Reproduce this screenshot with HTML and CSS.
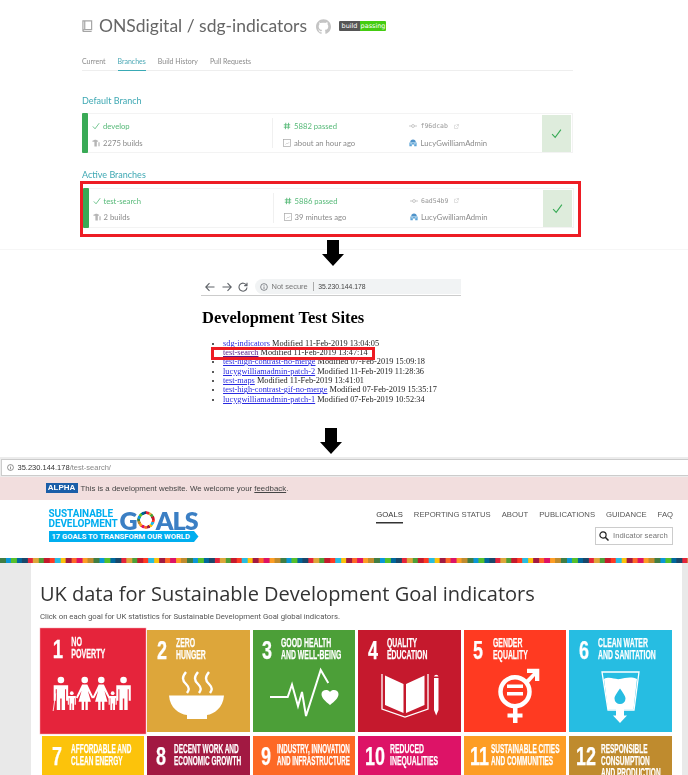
FILE: index.html
```html
<!DOCTYPE html>
<html lang="en">
<head>
<meta charset="utf-8">
<title>Deployment overview</title>
<link rel="stylesheet" href="styles.css">
</head>
<body>
<svg class="sprite" aria-hidden="true">
  <symbol id="check" viewBox="0 0 10 10"><path d="M1 5.5 3.8 8.5 9 1.5" fill="none" stroke="currentColor" stroke-width="1"/></symbol>
  <symbol id="hash" viewBox="0 0 10 10"><path d="M3.5 1 3 9M7 1 6.5 9M1 3.5H9M1 6.5H9" fill="none" stroke="currentColor" stroke-width="1.1"/></symbol>
  <symbol id="builds" viewBox="0 0 10 10"><path d="M0 2.5 3.5 1H5L8 2.5 7 3.5H6V9.5H3V3.5H1ZM8 4H9.5V9H8Z" fill="#b5b5b5"/></symbol>
  <symbol id="cal" viewBox="0 0 10 10"><rect x=".5" y=".5" width="9" height="9" fill="none" stroke="#aaa" stroke-width=".9"/><path d="M3 7 5 5 6 6 7.5 4" fill="none" stroke="#bbb" stroke-width=".7"/></symbol>
  <symbol id="commit" viewBox="0 0 10 10"><circle cx="5" cy="5" r="1.8" fill="none" stroke="#aaa" stroke-width=".8"/><path d="M0 5H3M7 5H10" stroke="#aaa" stroke-width=".8"/></symbol>
  <symbol id="ext" viewBox="0 0 10 10"><path d="M7.5 6V9H1V2.5H4M5 1H9V5M9 1 4.5 5.5" fill="none" stroke="#bbb" stroke-width=".9"/></symbol>
  <symbol id="avatar" viewBox="0 0 10 10"><path d="M1.5 4C1.5 1.5 3 .5 5 .5S8.500 1.500 8.500 4Z" fill="#4f93c9"/><path d="M.5 4.500H9.500V9H6.500V7H3.500V9H.5Z" fill="#5ba3d6"/><path d="M1.500 6H4M6 6H8.500" stroke="#fff" stroke-width=".8"/></symbol>
  <symbol id="down" viewBox="0 0 22 26"><path d="M5 0H17V14H22L11 26 0 14H5Z"/></symbol>
  <symbol id="info" viewBox="0 0 10 10"><circle cx="5" cy="5" r="4.200" fill="none" stroke="currentColor" stroke-width=".9"/><path d="M5 4.300V7.500M5 2.500V3.500" stroke="currentColor" stroke-width=".9"/></symbol>
  <symbol id="man" viewBox="-8 -4 16 34"><circle cy="0" r="3.200"/><path d="M-7 5H7V20H5V9H4V29H.7V18H-.7V29H-4V9H-5V20H-7Z"/></symbol>
  <symbol id="woman" viewBox="-9 -4 18 34"><circle cy="0" r="3.200"/><path d="M-2.500 4.500H2.500L8.500 17 7 18 3 10.500 6 21H3V29H.7V21H-.7V29H-3V21H-6L-3 10.500-7 18-8.500 17Z"/></symbol>
</svg>

<main class="page">
  <section class="ci">
    <div class="repo">
      <svg class="repo-icon" viewBox="0 0 12 14"><path d="M1 1.500H10.500V11H3A2 2 0 0 0 1 13ZM1 13H10.500M3 1.500V11" fill="none" stroke="#a5a5a5" stroke-width="1.300"/></svg>
      <h1 class="repo-name">ONSdigital / sdg-indicators</h1>
      <svg class="gh-icon" viewBox="0 0 24 24"><path fill="#c4c4c4" d="M12 .297c-6.63 0-12 5.373-12 12 0 5.303 3.438 9.8 8.205 11.385.6.113.82-.258.82-.577 0-.285-.01-1.04-.015-2.04-3.338.724-4.042-1.61-4.042-1.61C4.422 18.07 3.633 17.7 3.633 17.7c-1.087-.744.084-.729.084-.729 1.205.084 1.838 1.236 1.838 1.236 1.07 1.835 2.809 1.305 3.495.998.108-.776.417-1.305.76-1.605-2.665-.3-5.466-1.332-5.466-5.93 0-1.31.465-2.38 1.235-3.22-.135-.303-.54-1.523.105-3.176 0 0 1.005-.322 3.3 1.23.96-.267 1.98-.399 3-.405 1.02.006 2.04.138 3 .405 2.28-1.552 3.285-1.23 3.285-1.23.645 1.653.24 2.873.12 3.176.765.84 1.23 1.91 1.23 3.22 0 4.61-2.805 5.625-5.475 5.92.42.36.81 1.096.81 2.22 0 1.606-.015 2.896-.015 3.286 0 .315.21.69.825.57C20.565 22.092 24 17.592 24 12.297c0-6.627-5.373-12-12-12"/></svg>
      <span class="badge"><span class="badge-l">build</span><span class="badge-r">passing</span></span>
    </div>
    <nav class="tabs">
      <a class="tab">Current</a>
      <a class="tab tab-on">Branches</a>
      <a class="tab">Build History</a>
      <a class="tab">Pull Requests</a>
    </nav>
    <h2 class="ci-head ci-head-first">Default Branch</h2>
    <div class="card">
      <div class="bar"></div>
      <div class="cell cell-a">
        <div class="row ok"><svg class="ico"><use href="#check"/></svg>develop</div>
        <div class="row"><svg class="ico"><use href="#builds"/></svg>2275 builds</div>
      </div>
      <div class="cell cell-b">
        <div class="row ok"><svg class="ico"><use href="#hash"/></svg>5882 passed</div>
        <div class="row"><svg class="ico"><use href="#cal"/></svg>about an hour ago</div>
      </div>
      <div class="cell cell-c">
        <div class="row"><svg class="ico"><use href="#commit"/></svg><span class="sha">f96dcab</span><svg class="ico-ext"><use href="#ext"/></svg></div>
        <div class="row"><svg class="ico"><use href="#avatar"/></svg>LucyGwilliamAdmin</div>
      </div>
      <div class="status"><svg class="ico-status"><use href="#check"/></svg></div>
    </div>
    <h2 class="ci-head">Active Branches</h2>
    <div class="redbox">
      <div class="card">
        <div class="bar"></div>
        <div class="cell cell-a">
          <div class="row ok"><svg class="ico"><use href="#check"/></svg>test-search</div>
          <div class="row"><svg class="ico"><use href="#builds"/></svg>2 builds</div>
        </div>
        <div class="cell cell-b">
          <div class="row ok"><svg class="ico"><use href="#hash"/></svg>5886 passed</div>
          <div class="row"><svg class="ico"><use href="#cal"/></svg>39 minutes ago</div>
        </div>
        <div class="cell cell-c">
          <div class="row"><svg class="ico"><use href="#commit"/></svg><span class="sha">6ad54b9</span><svg class="ico-ext"><use href="#ext"/></svg></div>
          <div class="row"><svg class="ico"><use href="#avatar"/></svg>LucyGwilliamAdmin</div>
        </div>
        <div class="status"><svg class="ico-status"><use href="#check"/></svg></div>
      </div>
    </div>
  </section>

  <svg class="arrow arrow-one"><use href="#down"/></svg>

  <section class="sites">
    <div class="toolbar">
      <svg class="tb-btn" viewBox="0 0 10 10"><path d="M9.500 5H1M4.500 1.200 .8 5 4.500 8.800" fill="none" stroke="#5f6368" stroke-width="1.100"/></svg>
      <svg class="tb-btn" viewBox="0 0 10 10"><path d="M.5 5H9M5.500 1.200 9.200 5 5.500 8.800" fill="none" stroke="#5f6368" stroke-width="1.100"/></svg>
      <svg class="tb-btn" viewBox="0 0 10 10"><path d="M8.500 3.200A4 4 0 1 0 9 5.500M9 .8V3.600H6.200" fill="none" stroke="#5f6368" stroke-width="1.100"/></svg>
      <div class="omni">
        <svg class="omni-info"><use href="#info"/></svg>
        <span class="omni-warn">Not secure</span>
        <span class="omni-url">35.230.144.178</span>
      </div>
    </div>
    <h2 class="sites-title">Development Test Sites</h2>
    <div class="sites-list">
      <ul class="list">
        <li><a class="lnk">sdg-indicators</a> Modified 11-Feb-2019 13:04:05</li>
        <li><a class="lnk lnk-seen">test-search</a> Modified 11-Feb-2019 13:47:14</li>
        <li><a class="lnk">test-high-contrast-no-merge</a> Modified 07-Feb-2019 15:09:18</li>
        <li><a class="lnk">lucygwilliamadmin-patch-2</a> Modified 11-Feb-2019 11:28:36</li>
        <li><a class="lnk">test-maps</a> Modified 11-Feb-2019 13:41:01</li>
        <li><a class="lnk">test-high-contrast-gif-no-merge</a> Modified 07-Feb-2019 15:35:17</li>
        <li><a class="lnk">lucygwilliamadmin-patch-1</a> Modified 07-Feb-2019 10:52:34</li>
      </ul>
      <div class="list-mark"></div>
    </div>
  </section>

  <svg class="arrow arrow-two"><use href="#down"/></svg>

  <section class="site">
    <div class="addr">
      <div class="addr-box">
        <svg class="addr-info"><use href="#info"/></svg>
        <span class="addr-host">35.230.144.178</span><span class="addr-path">/test-search/</span>
      </div>
    </div>
    <div class="alpha">
      <span class="alpha-tag">ALPHA</span>
      <span class="alpha-text">This is a development website. We welcome your <u>feedback</u>.</span>
    </div>
    <header class="head">
      <div class="logo">
        <div class="logo-top">
          <div class="logo-sd">SUSTAINABLE<br>DEVELOPMENT</div>
          <div class="logo-goals"><span>G</span><span class="wheel"></span><span>ALS</span></div>
        </div>
        <div class="logo-strip">17 GOALS TO TRANSFORM OUR WORLD</div>
      </div>
      <div class="head-right">
        <nav class="menu">
          <a class="menu-item menu-on">GOALS</a>
          <a class="menu-item">REPORTING STATUS</a>
          <a class="menu-item">ABOUT</a>
          <a class="menu-item">PUBLICATIONS</a>
          <a class="menu-item">GUIDANCE</a>
          <a class="menu-item">FAQ</a>
        </nav>
        <div class="search">
          <svg class="search-ico" viewBox="0 0 10 10"><circle cx="4" cy="4" r="3.100" fill="none" stroke="#222" stroke-width="1.200"/><path d="M6.300 6.300 9.500 9.500" stroke="#222" stroke-width="1.500"/></svg>
          <span>Indicator search</span>
        </div>
      </div>
    </header>
    <div class="rainbow"></div>
    <div class="body">
      <div class="content">
        <h2 class="lead">UK data for Sustainable Development Goal indicators</h2>
        <p class="intro">Click on each goal for UK statistics for Sustainable Development Goal global indicators.</p>
        <div class="goals">
          <a class="tile g1">
            <div class="tile-head"><span class="num"><b>1</b></span><span class="lbl">NO<br>POVERTY</span></div>
            <svg class="art" viewBox="0 34 102 68" fill="#fff">
              <path d="M12.500 80 15 63" stroke="#fff" stroke-width=".8"/>
              <use href="#man" x="12" y="46" width="16" height="34"/>
              <use href="#man" x="26" y="60.500" width="9" height="19"/>
              <use href="#woman" x="34" y="46" width="18" height="34"/>
              <use href="#woman" x="50" y="46" width="18" height="34"/>
              <use href="#man" x="65.500" y="60.500" width="9" height="19"/>
              <use href="#man" x="72.500" y="46" width="16" height="34"/>
            </svg>
          </a>
          <a class="tile g2">
            <div class="tile-head"><span class="num"><b>2</b></span><span class="lbl">ZERO<br>HUNGER</span></div>
            <svg class="art" viewBox="0 34 102 68">
              <path d="M22 65.500H77C76 78 67 84 60 85V89H40V85C32 84 23 78 22 65.500Z" fill="#fff"/>
              <path d="M39 42C35 47 35 50 39 54S42 60 40 63M51 42C47 47 47 50 51 54S54 60 52 63M62 42C58 47 58 50 62 54S65 60 63 63" fill="none" stroke="#fff" stroke-width="2.400"/>
            </svg>
          </a>
          <a class="tile g3">
            <div class="tile-head"><span class="num"><b>3</b></span><span class="lbl">GOOD HEALTH<br>AND WELL-BEING</span></div>
            <svg class="art" viewBox="0 34 102 68">
              <path d="M17 67H34.700L39 54.500 45 76 49 62 53 86 67.700 40 75.300 53" fill="none" stroke="#fff" stroke-width="2"/>
              <path d="M77 75C72 71 68.500 68 68.500 64S74.500 58.500 77 62C79.500 58.500 85.500 60 85.500 64S82 71 77 75Z" fill="#fff"/>
            </svg>
          </a>
          <a class="tile g4">
            <div class="tile-head"><span class="num"><b>4</b></span><span class="lbl">QUALITY<br>EDUCATION</span></div>
            <svg class="art" viewBox="0 34 102 68" fill="#fff">
              <path d="M27 45.500 45.500 54V83L27 75ZM66.500 45.500 48 54V83L66.500 75Z"/>
              <path d="M24 44V79L47 87 70 79V44" fill="none" stroke="#fff" stroke-width="1.300"/>
              <path d="M76 46.500A2.300 2.300 0 0 1 80.500 46.500H76ZM76 48H80.500V80L78.200 85.500 76 80Z"/>
            </svg>
          </a>
          <a class="tile g5">
            <div class="tile-head"><span class="num"><b>5</b></span><span class="lbl">GENDER<br>EQUALITY</span></div>
            <svg class="art" viewBox="0 34 102 68" fill="#fff">
              <circle cx="51" cy="61.700" r="14.500" fill="none" stroke="#fff" stroke-width="4.500"/>
              <path d="M43 54.500H59V58H43ZM43 62H59V65.500H43ZM49 76H53.500V83.500H58.500V87.500H53.500V93H49V87.500H43.500V83.500H49ZM61 51 69 43H63V38.700H75.300V51H71V46L64 54Z"/>
            </svg>
          </a>
          <a class="tile g6">
            <div class="tile-head"><span class="num"><b>6</b></span><span class="lbl">CLEAN WATER<br>AND SANITATION</span></div>
            <svg class="art" viewBox="0 34 102 68">
              <path d="M33 42H70L65 80H39Z" fill="none" stroke="#fff" stroke-width="1.300"/>
              <path d="M35 49C41 46 46 50 51 49S62 46 68 49L64.500 79.500H55V85.500H58L51 93 44 85.500H47V79.500H39Z" fill="#fff"/>
              <path d="M51 58.500C48 63 45.500 66 45.500 68.500A5.500 5.500 0 0 0 56.500 68.500C56.500 66 54 63 51 58.500Z" fill="#26bde2"/>
            </svg>
          </a>
          <a class="tile g7"><div class="tile-head"><span class="num"><b>7</b></span><span class="lbl">AFFORDABLE AND<br>CLEAN ENERGY</span></div></a>
          <a class="tile g8"><div class="tile-head"><span class="num"><b>8</b></span><span class="lbl">DECENT WORK AND<br>ECONOMIC GROWTH</span></div></a>
          <a class="tile g9"><div class="tile-head"><span class="num"><b>9</b></span><span class="lbl">INDUSTRY, INNOVATION<br>AND INFRASTRUCTURE</span></div></a>
          <a class="tile g10"><div class="tile-head"><span class="num"><b>10</b></span><span class="lbl">REDUCED<br>INEQUALITIES</span></div></a>
          <a class="tile g11"><div class="tile-head"><span class="num"><b>11</b></span><span class="lbl">SUSTAINABLE CITIES<br>AND COMMUNITIES</span></div></a>
          <a class="tile g12"><div class="tile-head"><span class="num"><b>12</b></span><span class="lbl">RESPONSIBLE<br>CONSUMPTION<br>AND PRODUCTION</span></div></a>
        </div>
      </div>
    </div>
  </section>
</main>
</body>
</html>
```

FILE: styles.css
```css
* { box-sizing: border-box; }
html, body { margin: 0; padding: 0; background: #fff; }
html { height: 775px; overflow: hidden; }
body { width: 688px; height: 775px; overflow: hidden; font-family: "Liberation Sans", Arial, sans-serif; }
.page { height: 775px; overflow: hidden; filter: blur(.3px); }
.sprite { display: none; }
h1, h2, p, ul { margin: 0; padding: 0; font-weight: normal; }

/* CI dashboard */
.ci { height: 250px; padding: 16px 115px 0 82px; border-bottom: 1px solid #f6f6f6; font-family: Lato, sans-serif; }
.repo { display: flex; align-items: center; height: 20px; }
.repo-icon { width: 11px; height: 14px; margin-right: 6px; }
.repo-name { font-size: 17.500px; color: #666; line-height: 20px; width: 217px; white-space: nowrap; }
.gh-icon { width: 15px; height: 15px; margin-right: 8px; }
.badge { display: flex; height: 10px; font: 6.500px/10px "DejaVu Sans", sans-serif; color: #fff; border-radius: 1px; overflow: hidden; }
.badge-l { width: 21px; background: #555; text-align: center; }
.badge-r { width: 26px; background: #4c1; text-align: center; }
.tabs { display: flex; gap: 12px; height: 19px; margin-top: 16px; border-bottom: 1px solid #eee; font-size: 7px; line-height: 18px; color: #8a8a8a; }
.tab { height: 19px; }
.tab-on { color: #4aa8b5; border-bottom: 1px solid #39aab5; }
.ci-head { font-size: 9px; line-height: 12px; color: #3ea8b3; margin-top: 16px; }
.ci-head-first { margin-top: 24px; }
.ci-head + .card { margin-top: 6px; }
.card { display: grid; grid-template-columns: 6px 184px 137px 133px 1fr; height: 40px; width: 491px; border: 1px solid #f3f3f3; border-left: 0; font-size: 7.700px; color: #8b8b8b; }
.bar { background: #39aa56; margin-top: -1px; margin-bottom: -1px; border-radius: 1px; }
.cell { height: 30px; margin-top: 4px; }
.cell-a { padding-left: 4px; }
.cell-b { padding-left: 10px; border-left: 1px solid #f0f0f0; }
.row { display: flex; align-items: center; line-height: 16.500px; height: 16.500px; white-space: nowrap; }
.ok { color: #56b978; }
.ico { width: 8px; height: 8px; margin-right: 3px; flex: none; }
.cell-c .ico { margin-right: 3.500px; }
.sha { font: 6.500px "DejaVu Sans Mono", monospace; color: #999; }
.ico-ext { width: 5px; height: 5px; margin-left: 6px; }
.status { background: #deecdc; margin: 1px 1px 0 0; display: flex; align-items: center; justify-content: center; color: #39aa56; }
.ico-status { width: 11px; height: 11px; }
.redbox { width: 501px; margin: 0 0 0 -2.500px; padding: 3.500px 4.500px 6px 0; border: 3px solid #ed1c24; }

.arrow { display: block; width: 22px; height: 26px; fill: #000; position: relative; }
.arrow-one { margin: -10px 0 0 322px; }
.arrow-two { margin: 0 0 0 320px; }

/* Test site index */
.sites { margin: 13px 0 0 201px; height: 149px; }
.toolbar { display: flex; align-items: center; width: 260px; height: 17px; border-bottom: 1px solid #ccc; padding-left: 4px; padding-bottom: 1px; }
.tb-btn { width: 10px; height: 10px; margin-right: 6.500px; flex: none; }
.omni { display: flex; align-items: center; flex: 1; height: 15px; background: #f1f3f4; border-radius: 8px 0 0 8px; padding-left: 5px; font: 7.500px "Liberation Sans", sans-serif; }
.omni-info { width: 8px; height: 8px; color: #5f6368; margin-right: 4px; }
.omni-warn { color: #777; padding-right: 5px; border-right: 1px solid #aaa; line-height: 9px; }
.omni-url { color: #444; margin-left: 4.500px; font-size: 6.800px; }
.sites-title { font: bold 16.500px/18px "Liberation Serif", serif; color: #000; margin: 12.500px 0 0 1px; white-space: nowrap; }
.sites-list { position: relative; margin-top: 12px; }
.list { list-style: disc; padding-left: 22px; font: 8.300px/9.350px "Liberation Serif", serif; color: #222; white-space: nowrap; }
.lnk { color: #2a2ae0; text-decoration: underline; }
.lnk-seen { color: #551a8b; }
.list-mark { position: absolute; left: 10px; top: 8px; width: 164px; height: 13px; border: 3px solid #ed1c24; }

/* SDG website */
.site { margin-top: 3px; }
.addr { height: 19.500px; padding: 1.500px 0 1px 1px; background: #ececec; }
.addr-box { display: flex; align-items: center; width: 700px; height: 17px; padding-left: 5px; background: #fff; border: 1px solid #ccc; font-size: 7.500px; }
.addr-info { width: 7px; height: 7px; color: #555; margin-right: 3.500px; }
.addr-host { color: #333; }
.addr-path { color: #888; }
.alpha { display: flex; align-items: center; height: 23px; padding-left: 45.500px; background: #f2dede; }
.alpha-tag { width: 32px; height: 10px; background: #1b5ea8; color: #fff; font: bold 8px/10px "Liberation Sans", sans-serif; text-align: center; margin-right: 3px; }
.alpha-text { font-size: 7.850px; color: #444; white-space: nowrap; }

.head { display: flex; justify-content: space-between; height: 58px; padding: 8px 15px 0 48.500px; }
.logo { width: 150px; }
.logo-top { display: flex; height: 24px; }
.logo-sd { font: bold 10px/10px Roboto, sans-serif; color: #00aeef; width: 71px; padding-top: 1px; white-space: nowrap; letter-spacing: -.1px; }
.logo-goals { display: flex; align-items: center; font: 800 25px/24px Lato, sans-serif; color: #3b7fc4; letter-spacing: -.9px; }
.wheel { width: 18px; height: 18px; margin: 0 .5px; border-radius: 50%; background: conic-gradient(#e5243b 0 6%, #dda63a 0 12%, #4c9f38 0 18%, #c5192d 0 24%, #ff3a21 0 30%, #26bde2 0 36%, #fcc30b 0 42%, #a21942 0 48%, #fd6925 0 54%, #dd1367 0 60%, #fd9d24 0 66%, #bf8b2e 0 72%, #3f7e44 0 78%, #0a97d9 0 84%, #56c02b 0 90%, #00689d 0 95%, #19486a 0); -webkit-mask: radial-gradient(circle, transparent 5.500px, #000 6px); mask: radial-gradient(circle, transparent 5.500px, #000 6px); }
.logo-strip { height: 11px; margin-top: -.5px; background: #00aeef; color: #fff; font: bold 7.600px/11px Roboto, sans-serif; padding-left: 3px; white-space: nowrap; clip-path: polygon(0 0, 97% 0, 100% 50%, 97% 100%, 0 100%); }
.head-right { display: flex; flex-direction: column; align-items: flex-end; }
.menu { display: flex; gap: 11px; font-size: 7.700px; line-height: 14px; color: #555; }
.menu-item { height: 14px; white-space: nowrap; }
.menu-on { color: #333; box-shadow: 0 1.500px 0 #333; }
.search { display: flex; align-items: center; width: 78px; height: 18px; margin-top: 5px; padding-left: 3px; border: 1px solid #ccc; font-size: 7.700px; color: #777; white-space: nowrap; }
.search-ico { width: 10px; height: 10px; margin-right: 4px; flex: none; }
.rainbow { height: 5.500px; background: linear-gradient(90deg,
  #3f7e44 0 5.500px, #0a97d9 0 11px, #56c02b 0 16.500px, #00689d 0 22px, #19486a 0 27.500px,
  #e5243b 0 33px, #dda63a 0 38.500px, #4c9f38 0 44px, #c5192d 0 49.500px, #ff3a21 0 55px,
  #26bde2 0 60.500px, #fcc30b 0 66px, #a21942 0 71.500px, #fd6925 0 77px, #dd1367 0 82.500px,
  #fd9d24 0 88px, #bf8b2e 0 93.500px) 0 0 / 93.500px 100% repeat-x; }
.body { background: #e9e9e9; padding: 0 6px 0 31px; height: 213px; }
.content { background: #fff; height: 213px; padding: 18px 0 0 9px; overflow: hidden; }
.lead { font: 20px/26px "Open Sans", sans-serif; color: #333; white-space: nowrap; }
.intro { font: 7.750px/12px Roboto, sans-serif; color: #555; margin-top: 3.500px; white-space: nowrap; }
.goals { display: grid; grid-template-columns: repeat(6, 102.100px); grid-auto-rows: 102px; gap: 4.700px 3.400px; margin: 7px 0 0 2px; }
.tile { display: block; overflow: hidden; background: var(--bg); color: #fff; height: 102px; }
.tile-head { display: flex; height: 34px; padding: 8px 0 0 var(--pad, 10px); -webkit-text-stroke: .25px #fff; }
.num { width: var(--nw, 19px); flex: none; font: bold 25px/24px "Liberation Sans", sans-serif; }
.num b { display: inline-block; transform: scaleX(var(--ns, .72)); transform-origin: 0 50%; }
.lbl { margin-top: -1px; font: bold 12.500px/12px "Liberation Sans", sans-serif; white-space: nowrap; transform: scaleX(var(--sx, .55)); transform-origin: 0 0; }
.art { display: block; width: 102px; height: 68px; }
.g1 { --bg: #e5243b; --pad: 12px; --nw: 18px; transform: scale(1.035); box-shadow: 0 0 0 .5px #f7b5bd; }
.g2 { --bg: #dda63a; }
.g3 { --bg: #4c9f38; --pad: 9px; }
.g4 { --bg: #c5192d; }
.g5 { --bg: #ff3a21; --pad: 9px; --nw: 20px; }
.g6 { --bg: #26bde2; }
.g7 { --bg: #fcc30b; --nw: 18.500px; --sx: .52; }
.g8 { --bg: #a21942; --pad: 9px; --nw: 18px; --sx: .52; }
.g9 { --bg: #fd6925; --pad: 8px; --nw: 16px; --sx: .5; }
.g10 { --bg: #dd1367; --pad: 7px; --nw: 25px; }
.g11 { --bg: #fd9d24; --pad: 6px; --nw: 21.500px; --sx: .52; }
.g12 { --bg: #bf8b2e; --pad: 7px; --nw: 25px; --sx: .52; }
```
